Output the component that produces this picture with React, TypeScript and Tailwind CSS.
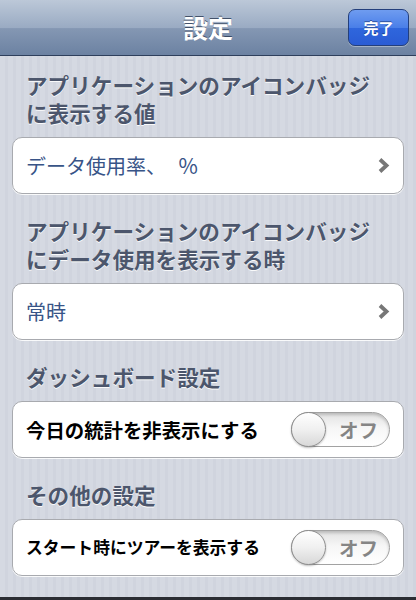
import React from "react";

const font = {
  fontFamily: '"Noto Sans CJK JP", "Noto Sans", "Liberation Sans", sans-serif',
};

function Chevron() {
  return (
    <svg width="13" height="17" viewBox="0 0 13 17" className="shrink-0">
      <path d="M3 2.5 L9.5 8.5 L3 14.5" fill="none" stroke="#777777" strokeWidth="3.8" />
    </svg>
  );
}

function Toggle() {
  return (
    <div className="relative h-[35px] w-[99px] shrink-0 rounded-full border border-[#a2a2a2] bg-[linear-gradient(180deg,#e2e2e2_0%,#f6f6f6_45%,#ffffff_100%)] shadow-[inset_0_2px_3px_rgba(0,0,0,0.18)]">
      <div className="absolute left-[-1px] top-[-1px] h-[35px] w-[35px] rounded-full border border-[#8e8e8e] bg-[linear-gradient(180deg,#ffffff_0%,#f0f0f0_50%,#d8d8d8_100%)] shadow-[0_1px_2px_rgba(0,0,0,0.25)]" />
      <div className="absolute inset-y-0 left-[36px] right-0 flex items-center justify-center text-[19.5px] font-bold leading-none text-[#858585]">
        オフ
      </div>
    </div>
  );
}

function Header({ children }: { children: React.ReactNode }) {
  return (
    <div className="mb-[10px] px-[26px] text-[21.6px] font-bold leading-[28px] text-[#4c566c] [text-shadow:0_1px_0_rgba(255,255,255,0.9)]">
      {children}
    </div>
  );
}

function Card({ children }: { children: React.ReactNode }) {
  return (
    <div className="mx-[12px] flex h-[57px] items-center rounded-[10px] border border-[#a8aaaf] bg-white pl-[13px] pr-[13px] shadow-[0_1px_0_rgba(255,255,255,0.85)]">
      {children}
    </div>
  );
}

export default function App() {
  return (
    <div
      className="flex h-[600px] w-[416px] flex-col overflow-hidden bg-[repeating-linear-gradient(90deg,#d5d9e2_0px,#d5d9e2_5px,#d0d4de_5px,#d0d4de_8px)]"
      style={font}
    >
      {/* navigation bar */}
      <div className="relative flex h-[56px] shrink-0 items-center justify-center border-b border-[#2e3f5c] bg-[linear-gradient(180deg,#bcc8d8_0%,#9aabc3_50%,#8497b3_52%,#6c82a2_100%)]">
        <span className="text-[25px] font-bold leading-none text-white [text-shadow:0_-1px_0_rgba(40,55,80,0.8)]">
          設定
        </span>
        <div className="absolute right-[7px] top-[9px] flex h-[37px] w-[61px] items-center justify-center rounded-[7px] border border-[#233f7c] bg-[linear-gradient(180deg,#6f9cf0_0%,#4a7fe8_50%,#2f66dd_52%,#2a5cd4_100%)] shadow-[0_1px_0_rgba(255,255,255,0.35)]">
          <span className="text-[15px] font-bold leading-none text-white [text-shadow:0_-1px_0_rgba(0,20,80,0.5)]">
            完了
          </span>
        </div>
      </div>

      <div className="flex flex-1 flex-col gap-[23px] pt-[15px]">
        <section>
          <Header>
            アプリケーションのアイコンバッジ
            <br />
            に表示する値
          </Header>
          <Card>
            <span className="flex-1 text-[20px] leading-none text-[#385487]">
              データ使用率、 <span className="ml-[8px] text-[21px]">%</span>
            </span>
            <Chevron />
          </Card>
        </section>

        <section>
          <Header>
            アプリケーションのアイコンバッジ
            <br />
            にデータ使用を表示する時
          </Header>
          <Card>
            <span className="flex-1 text-[20px] leading-none text-[#385487]">常時</span>
            <Chevron />
          </Card>
        </section>

        <section>
          <Header>ダッシュボード設定</Header>
          <Card>
            <span className="flex-1 text-[19.4px] font-bold leading-none text-black">
              今日の統計を非表示にする
            </span>
            <Toggle />
          </Card>
        </section>

        <section>
          <Header>その他の設定</Header>
          <Card>
            <span className="flex-1 text-[16.8px] font-bold leading-none text-black">
              スタート時にツアーを表示する
            </span>
            <Toggle />
          </Card>
        </section>
      </div>

      <div className="h-[3px] shrink-0 bg-[#2b2d33]" />
    </div>
  );
}
